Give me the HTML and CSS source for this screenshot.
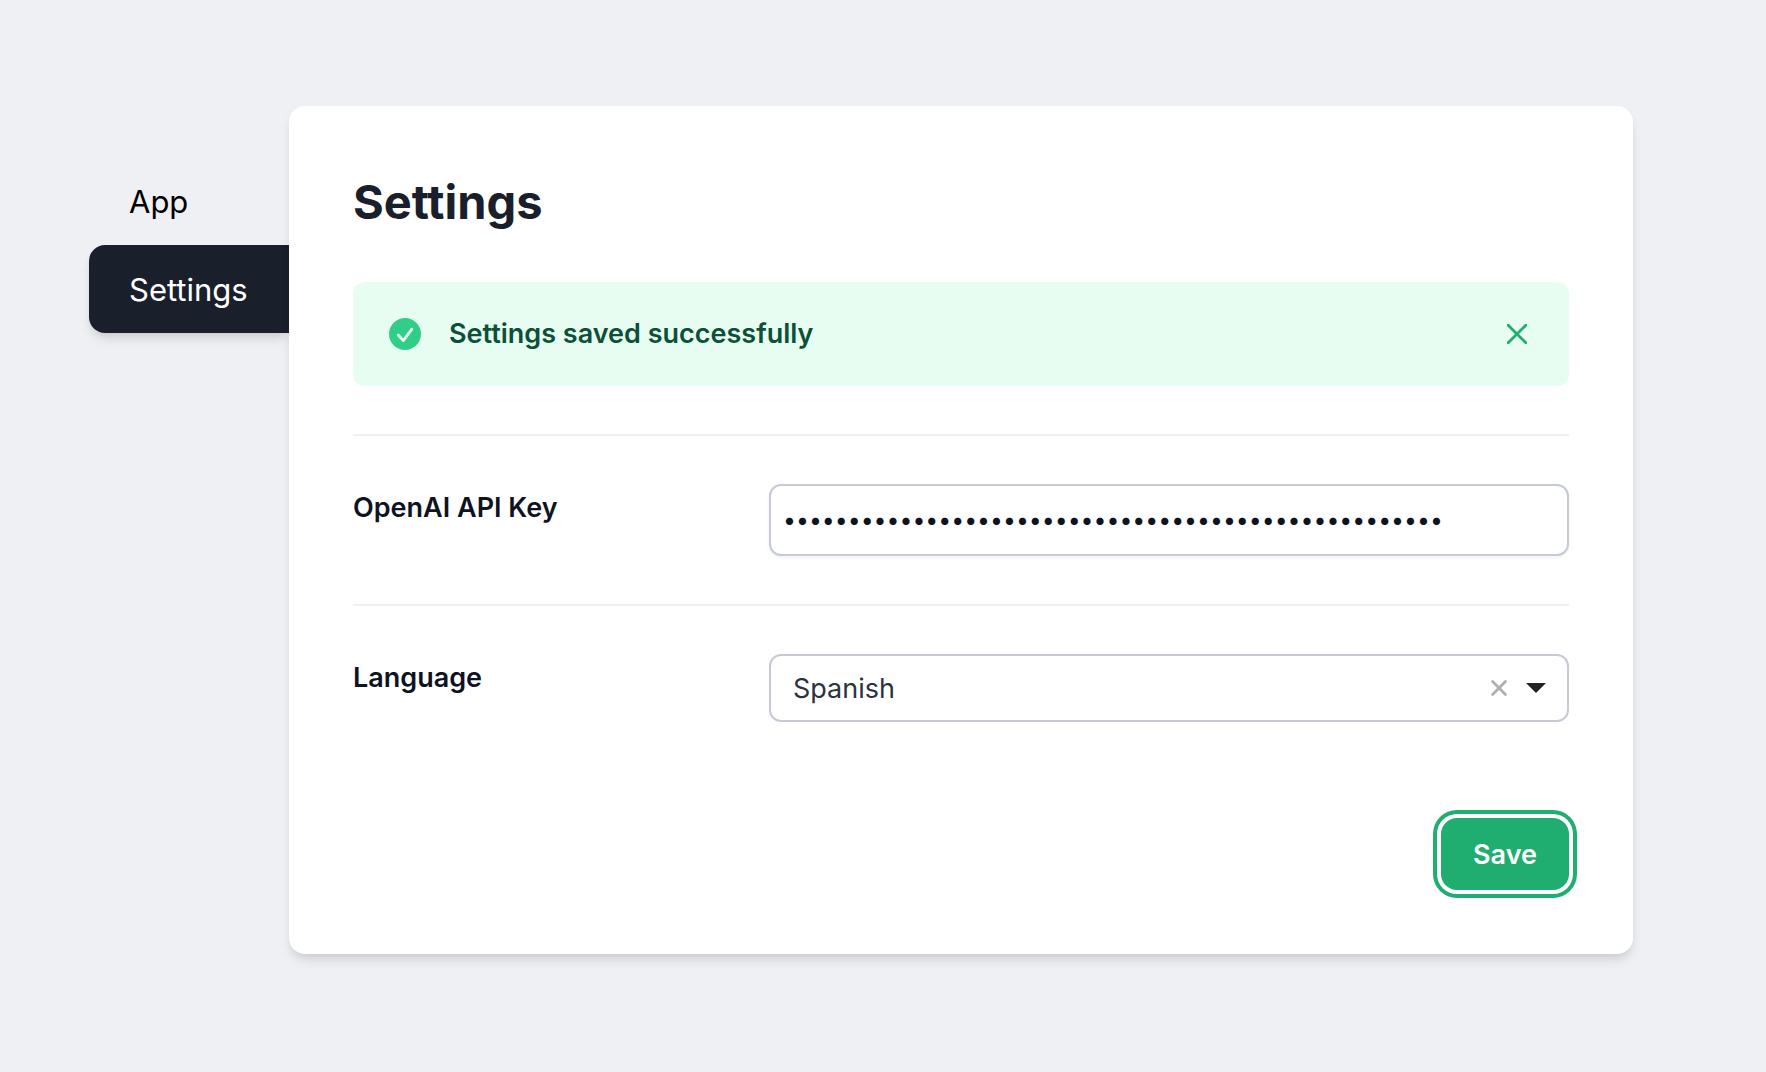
FILE: index.html
```html
<!DOCTYPE html>
<html lang="en">
<head>
  <meta charset="utf-8">
  <meta name="viewport" content="width=device-width, initial-scale=1">
  <title>Settings</title>
  <link rel="stylesheet" href="styles.css">
</head>
<body>
  <div class="layout">
    <nav class="nav">
      <a class="nav-link" href="#app">App</a>
      <a class="nav-link nav-link-active" href="#settings" aria-current="page">Settings</a>
    </nav>
    <main class="card">
      <h1 class="title">Settings</h1>
      <div class="alert" role="status">
        <svg class="alert-icon" viewBox="0 0 32 32" aria-hidden="true">
          <circle cx="16" cy="16" r="16" fill="#31ce88"/>
          <path d="M9.200 17 14.300 22.600 22.800 11.200" fill="none" stroke="#e7fdf2" stroke-width="2.800" stroke-linecap="round" stroke-linejoin="round"/>
        </svg>
        <p class="alert-text">Settings saved successfully</p>
        <button class="alert-close" type="button" aria-label="Dismiss">
          <svg viewBox="0 0 20 20" aria-hidden="true">
            <path d="M1.200 1.200 18.800 18.800M18.800 1.200 1.200 18.800" fill="none" stroke="#1fae70" stroke-width="2.800" stroke-linecap="round"/>
          </svg>
        </button>
      </div>
      <form class="form">
        <div class="row">
          <label class="label" for="api-key">OpenAI API Key</label>
          <input class="field key-field" id="api-key" type="password" value="sk-000000000000000000000000000000000000000000000000">
        </div>
        <div class="row">
          <label class="label" for="language">Language</label>
          <div class="select">
            <select class="field select-field" id="language">
              <option selected>Spanish</option>
              <option>English</option>
            </select>
            <div class="select-icons">
              <button class="select-clear" type="button" aria-label="Clear">
                <svg viewBox="0 0 16 16" aria-hidden="true">
                  <path d="M1.600 1.600 14.400 14.400M14.400 1.600 1.600 14.400" fill="none" stroke="#b0b0b0" stroke-width="2.800" stroke-linecap="round"/>
                </svg>
              </button>
              <svg class="select-arrow" viewBox="0 0 20 10" aria-hidden="true">
                <path d="M0 0H20L10 10Z" fill="#222"/>
              </svg>
            </div>
          </div>
        </div>
        <div class="actions">
          <button class="save" type="submit">Save</button>
        </div>
      </form>
    </main>
  </div>
</body>
</html>
```
FILE: styles.css
```css
* {
  box-sizing: border-box;
}

body {
  margin: 0;
  background: #eff0f4;
  color: #0e131f;
  font-family: Inter, "Liberation Sans", sans-serif;
  font-size: 27px;
}

button {
  margin: 0;
  padding: 0;
  border: 0;
  background: none;
  font: inherit;
  cursor: pointer;
}

svg {
  display: block;
}

.layout {
  display: flex;
  align-items: flex-start;
  padding: 106px 133px 106px 89px;
}

.nav {
  flex: 0 0 200px;
  padding-top: 51px;
}

.nav-link {
  display: block;
  padding: 21px 40px 19px;
  border-radius: 16px 0 0 16px;
  color: #000;
  font-size: 31px;
  line-height: 48px;
  text-decoration: none;
}

.nav-link-active {
  background: #19202b;
  color: #fff;
  box-shadow: 0 8px 12px -2px rgba(0, 0, 0, 0.1), 0 4px 8px -4px rgba(0, 0, 0, 0.1);
}

.card {
  position: relative;
  flex: 1;
  min-width: 0;
  padding: 64px;
  border-radius: 16px;
  background: #fff;
  box-shadow: 0 8px 12px -2px rgba(0, 0, 0, 0.1), 0 4px 8px -4px rgba(0, 0, 0, 0.1);
}

.title {
  margin: 0 0 48px;
  color: #19202b;
  font-size: 47px;
  font-weight: 700;
  line-height: 64px;
}

.alert {
  display: flex;
  align-items: center;
  gap: 28px;
  margin-bottom: 48px;
  padding: 32px 36px;
  border-radius: 12px;
  background: #e7fdf2;
}

.alert-icon {
  flex: none;
  width: 32px;
  height: 32px;
}

.alert-text {
  flex: 1;
  margin: 0;
  color: #0d5039;
  font-weight: 600;
  line-height: 40px;
}

.alert-close {
  padding: 6px;
}

.alert-close svg {
  width: 20px;
  height: 20px;
}

.row {
  display: grid;
  grid-template-columns: repeat(3, minmax(0, 1fr));
  gap: 32px;
  padding: 48px 0;
  border-top: 2px solid #eff0f4;
}

.label {
  font-weight: 600;
  line-height: 48px;
}

.field {
  display: block;
  width: 100%;
  border: 2px solid #c6cad6;
  border-radius: 12px;
  background: #fff;
  box-shadow: 0 2px 4px rgba(0, 0, 0, 0.05);
  font: inherit;
}

.key-field {
  grid-column: span 2;
  height: 72px;
  padding: 0 12px;
  color: #0e131f;
  font-size: 23px;
}

.select {
  position: relative;
  grid-column: span 2;
}

.select-field {
  height: 68px;
  padding: 0 96px 0 22px;
  color: #2b3340;
  box-shadow: none;
  appearance: none;
}

.select-icons {
  position: absolute;
  top: 0;
  right: 23px;
  bottom: 0;
  display: flex;
  align-items: center;
  gap: 19px;
}

.select-clear svg {
  width: 16px;
  height: 16px;
}

.select-arrow {
  width: 20px;
  height: 10px;
}

.actions {
  display: flex;
  justify-content: flex-end;
  padding-top: 48px;
}

.save {
  height: 72px;
  padding: 0 32px;
  border-radius: 16px;
  background: #1fae70;
  box-shadow: 0 0 0 4px #fff, 0 0 0 8px #1fae70;
  color: #fff;
  font-weight: 600;
}
```
